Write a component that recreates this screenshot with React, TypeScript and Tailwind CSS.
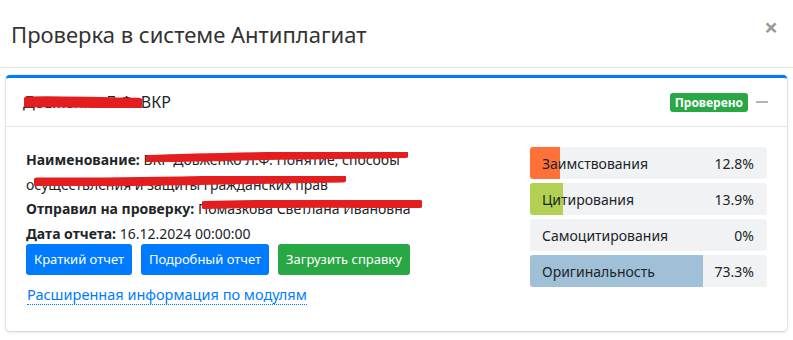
import React from 'react';

const stats = [
  { label: 'Заимствования', value: '12.8%', width: 30, color: 'bg-[#ff7138]' },
  { label: 'Цитирования', value: '13.9%', width: 33, color: 'bg-[#b2d051]' },
  { label: 'Самоцитирования', value: '0%', width: 0, color: 'bg-transparent' },
  { label: 'Оригинальность', value: '73.3%', width: 173, color: 'bg-[#9fc0d6]' },
];

function Scribble({ className, d, w = 8 }: { className: string; d: string; w?: number }) {
  return (
    <svg className={`pointer-events-none absolute ${className}`} viewBox="0 0 100 10" preserveAspectRatio="none">
      <path d={d} stroke="#e41e1e" strokeWidth={w} strokeLinecap="round" fill="none" vectorEffect="non-scaling-stroke" />
    </svg>
  );
}

export default function App() {
  return (
    <div className="w-[793px] h-[340px] bg-white overflow-hidden text-[#212529]" style={{ fontFamily: '"Noto Sans", "Liberation Sans", sans-serif' }}>
      <div className="flex items-start justify-between h-[68px] border-b border-[#e5e5e5] pl-[11px] pr-[15px]">
        <h4 className="mt-[18px] text-[22px] leading-[32px] text-[#333]">Проверка в системе Антиплагиат</h4>
        <button className="mt-[15px] text-[24px] font-bold text-[#999] leading-none">×</button>
      </div>

      <div className="mx-[6px] mt-[7px] rounded-[4px] border-t-[3px] border-[#007bff] bg-white shadow-[0_0_2px_rgba(0,0,0,0.2),0_1px_3px_rgba(0,0,0,0.15)]">
        <div className="relative flex items-center justify-between h-[49px] border-b border-[#e5e5e5] pl-[17px] pr-[19px]">
          <span className="relative text-[16px]">
            Довженко Л.Ф. ВКР
            <Scribble className="left-[1px] top-[6px] w-[118px] h-[12px]" d="M3 5 C30 4 60 6 97 6" w={11} />
          </span>
          <div className="flex items-center gap-[8px]">
            <span className="rounded-[3px] bg-[#28a745] px-[5px] py-[2px] text-[12px] font-bold leading-[15px] text-white">Проверено</span>
            <span className="block h-[2px] w-[12px] bg-[#adb5bd]" />
          </div>
        </div>

        <div className="flex justify-between pl-[20px] pr-[20px] pt-[21px] pb-[23px]">
          <div className="text-[14px] leading-[24.5px]">
            <div className="relative w-[390px]">
              <b>Наименование:</b> ВКР Довженко Л.Ф. Понятие, способы осуществления и защиты гражданских прав
              <Scribble className="left-[120px] top-[4px] w-[262px] h-[10px]" d="M1 7 C30 4 70 3 99 2" />
              <Scribble className="left-[8px] top-[28px] w-[312px] h-[10px]" d="M1 6 C30 7 70 3 99 2" w={9} />
            </div>
            <div className="relative whitespace-nowrap">
              <b>Отправил на проверку:</b> Помазкова Светлана Ивановна
              <Scribble className="left-[176px] top-[3px] w-[220px] h-[10px]" d="M1 5 C30 3 70 4 99 4" />
            </div>
            <div>
              <b>Дата отчета:</b> 16.12.2024 00:00:00
            </div>
            <div className="mt-[-2px] flex gap-[9px]">
              <button className="h-[31px] rounded-[3px] bg-[#007bff] px-[8px] text-[13px] text-white">Краткий отчет</button>
              <button className="h-[31px] rounded-[3px] bg-[#007bff] px-[8px] text-[13px] text-white">Подробный отчет</button>
              <button className="h-[31px] rounded-[3px] bg-[#28a745] px-[8px] text-[13px] text-white">Загрузить справку</button>
            </div>
            <a className="mt-[9px] ml-[1px] inline-block text-[14.5px] leading-[20px] text-[#007bff] border-b border-dotted border-[#007bff]">Расширенная информация по модулям</a>
          </div>

          <div className="mt-[-1px] flex w-[237px] flex-col gap-[4px]">
            {stats.map((s) => (
              <div key={s.label} className="relative h-[32px] overflow-hidden rounded-[3px] bg-[#f0f2f4]">
                <div className={`absolute left-0 top-0 h-full ${s.color}`} style={{ width: s.width }} />
                <div className="relative flex h-full items-center justify-between pl-[12px] pr-[13px] text-[14px]">
                  <span>{s.label}</span>
                  <span>{s.value}</span>
                </div>
              </div>
            ))}
          </div>
        </div>
      </div>
    </div>
  );
}
